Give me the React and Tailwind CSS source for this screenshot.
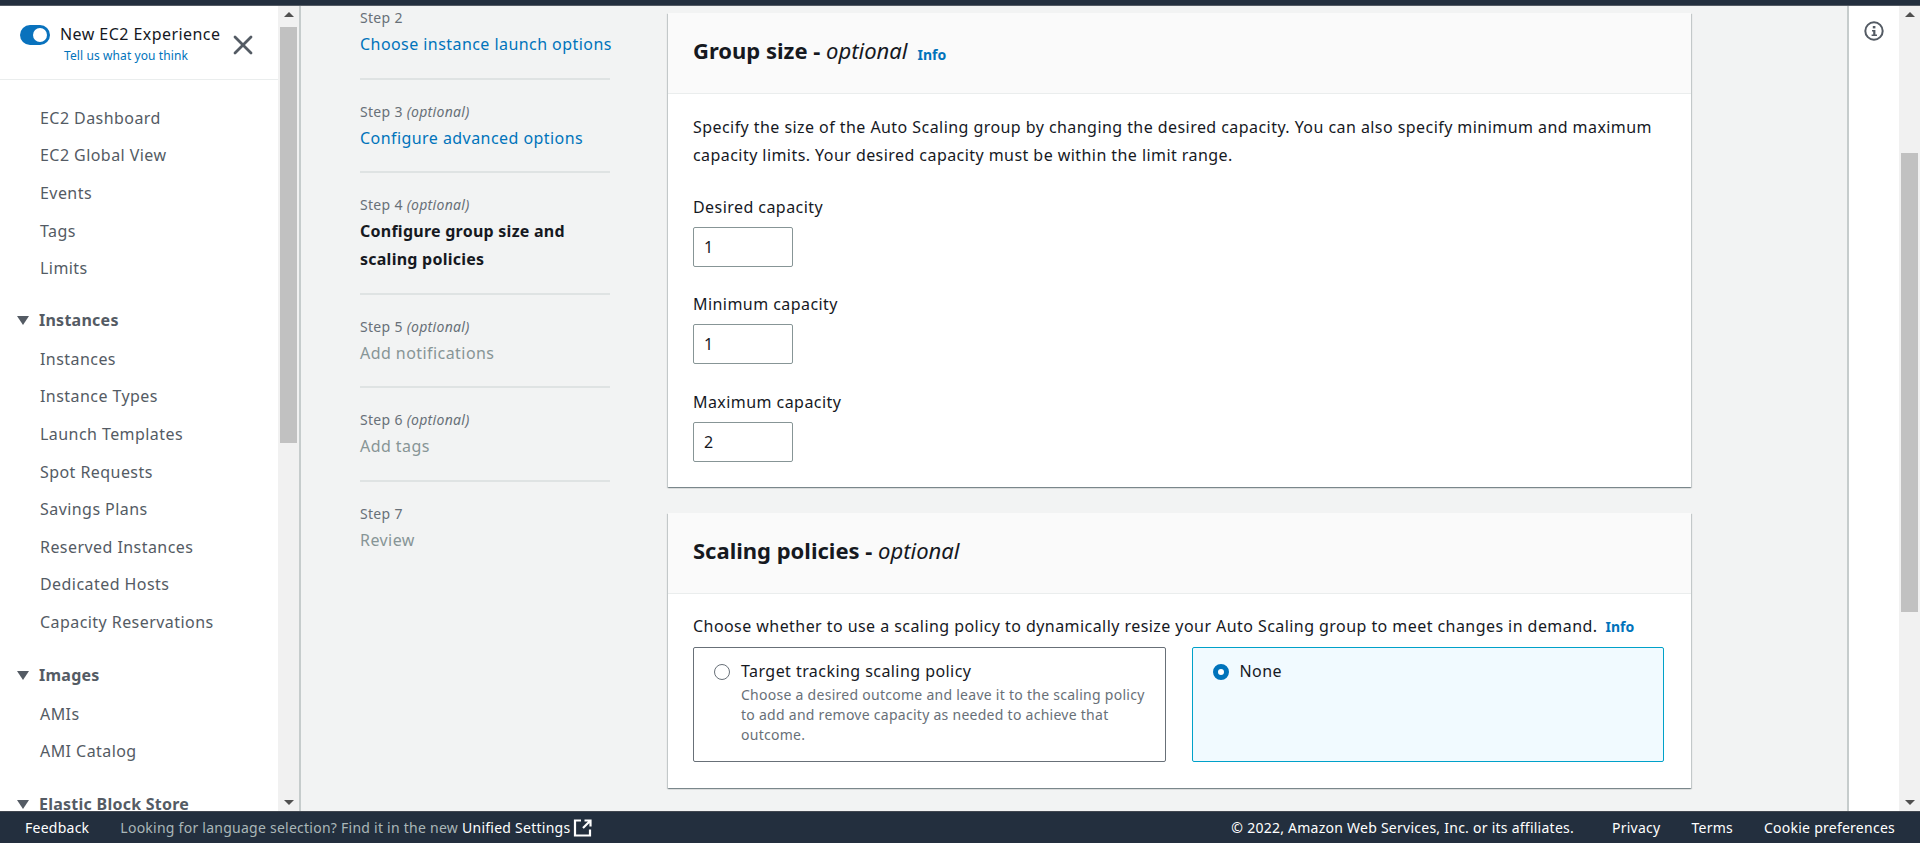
import { X } from 'lucide-react';

const navTop = ['EC2 Dashboard', 'EC2 Global View', 'Events', 'Tags', 'Limits'];
const navInstances = ['Instances', 'Instance Types', 'Launch Templates', 'Spot Requests', 'Savings Plans', 'Reserved Instances', 'Dedicated Hosts', 'Capacity Reservations'];
const navImages = ['AMIs', 'AMI Catalog'];

function ScrollBar({ thumbTop, thumbHeight, width }) {
  return (
    <div className={`${width} shrink-0 flex flex-col items-center bg-[#f1f1f1]`}>
      <div className="h-[17px] w-full flex items-center justify-center shrink-0">
        <div className="w-0 h-0 border-x-[5px] border-x-transparent border-b-[5px] border-b-[#505050]" />
      </div>
      <div className={`${thumbTop} shrink-0`} />
      <div className={`${thumbHeight} w-[17px] bg-[#c1c1c1] shrink-0`} />
      <div className="flex-1" />
      <div className="h-[17px] w-full flex items-center justify-center shrink-0">
        <div className="w-0 h-0 border-x-[5px] border-x-transparent border-t-[5px] border-t-[#505050]" />
      </div>
    </div>
  );
}

function NavItem({ label }) {
  return <div className="h-[37.6px] flex items-center pl-10 text-[#545b64]">{label}</div>;
}

function NavGroup({ label }) {
  return (
    <div className="h-[39px] flex items-center pl-4 font-bold tracking-[0.25px] text-[#545b64]">
      <span className="w-0 h-0 mr-[10px] ml-[1px] border-x-[6px] border-x-transparent border-t-[9px] border-t-[#545b64]" />
      {label}
    </div>
  );
}

function Sidebar() {
  return (
    <aside className="w-[301px] shrink-0 flex border-r-2 border-[#c6cccc] bg-white">
      <div className="flex-1 min-w-0 overflow-hidden">
        <div className="h-[74px] border-b border-[#eaeded] flex items-start pl-5 relative">
          <div className="mt-[19px] w-[30px] h-5 rounded-full bg-[#0972bd] flex items-center justify-end pr-[3px] shrink-0">
            <div className="w-[14px] h-[14px] rounded-full bg-white" />
          </div>
          <div className="ml-[10px] mt-[17px] text-[#16191f] whitespace-nowrap leading-[22px]">
            New EC2 Experience
            <div className="text-[12px] tracking-[0.1px] leading-4 mt-[3px] ml-1 text-[#0073bb]">Tell us what you think</div>
          </div>
          <X className="absolute left-[227px] top-[23px] text-[#545b64]" size={32} strokeWidth={2.1} />
        </div>
        <div className="pt-[19px]">
          {navTop.map((n) => <NavItem key={n} label={n} />)}
          <div className="mt-[14px]"><NavGroup label="Instances" /></div>
          {navInstances.map((n) => <NavItem key={n} label={n} />)}
          <div className="mt-[15px]"><NavGroup label="Images" /></div>
          {navImages.map((n) => <NavItem key={n} label={n} />)}
          <div className="mt-[15px]"><NavGroup label="Elastic Block Store" /></div>
        </div>
      </div>
      <ScrollBar width="w-[21px]" thumbTop="h-[4px]" thumbHeight="h-[416px]" />
    </aside>
  );
}

function Step({ step, optional, children, last }) {
  return (
    <li className={`pt-[21px] pb-[19.6px] ${last ? '' : 'border-b-2 border-[#dfe3e3]'}`}>
      <div className="text-[14px] tracking-[0.3px] leading-[22px] text-[#687078]">
        {step} {optional && <i>(optional)</i>}
      </div>
      <div className="mt-[1px] leading-[28px]">{children}</div>
    </li>
  );
}

function Steps() {
  return (
    <ol className="w-[250px] shrink-0 -mt-[20px]">
      <Step step="Step 2"><span className="whitespace-nowrap text-[#0073bb]">Choose instance launch options</span></Step>
      <Step step="Step 3" optional><span className="text-[#0073bb]">Configure advanced options</span></Step>
      <Step step="Step 4" optional><span className="block w-[210px] font-bold tracking-[0.25px] text-[#16191f]">Configure group size and scaling policies</span></Step>
      <Step step="Step 5" optional><span className="text-[#879596]">Add notifications</span></Step>
      <Step step="Step 6" optional><span className="text-[#879596]">Add tags</span></Step>
      <Step step="Step 7" last><span className="text-[#879596]">Review</span></Step>
    </ol>
  );
}

function Card({ title, info, children }) {
  return (
    <section className="bg-white shadow-[0_1px_1px_0_rgba(0,28,36,0.3),1px_1px_1px_0_rgba(0,28,36,0.15),-1px_1px_1px_0_rgba(0,28,36,0.15)]">
      <header className="h-[81px] bg-[#fafafa] border-b border-[#eaeded] flex items-center pl-[25px] pr-6">
        <h2 className="-mt-[6px] text-[22px] tracking-normal font-bold text-[#16191f]">{title} - <i className="font-normal">optional</i></h2>
        {info && <span className="ml-[10px] mt-[2px] text-[14px] tracking-normal font-bold text-[#0073bb]">Info</span>}
      </header>
      {children}
    </section>
  );
}

function Field({ label, value, top }) {
  return (
    <div className={top}>
      <div className="leading-[22px] text-[#16191f]">{label}</div>
      <div className="mt-[9px] w-[100px] h-10 border border-[#879596] rounded-[2px] flex items-center px-[10px] text-[#16191f] bg-white">{value}</div>
    </div>
  );
}

function RadioCard({ selected, label, desc }) {
  return (
    <div className={`flex-1 h-[115px] rounded-[2px] border flex items-start pl-5 pr-3 pt-3 ${selected ? 'border-[#00a1c9] bg-[#f1faff]' : 'border-[#687078] bg-white'}`}>
      {selected ? (
        <span className="mt-[4px] w-4 h-4 rounded-full border-[5px] border-[#0073bb] bg-white shrink-0" />
      ) : (
        <span className="mt-[4px] w-4 h-4 rounded-full border border-[#687078] bg-white shrink-0" />
      )}
      <div className="ml-[11px]">
        <div className="leading-[22px] text-[#16191f]">{label}</div>
        {desc && <div className="mt-[3px] text-[14px] tracking-[0.27px] leading-5 text-[#687078]">{desc}</div>}
      </div>
    </div>
  );
}

function FormCards() {
  return (
    <div className="w-[1023px] shrink-0 mt-[7px] flex flex-col gap-[26px]">
      <Card title="Group size" info>
        <div className="pl-[25px] pr-[27px] pt-[19px] pb-[25px]">
          <p className="leading-7 text-[#16191f]">
            Specify the size of the Auto Scaling group by changing the desired capacity. You can also specify minimum and maximum capacity limits. Your desired capacity must be within the limit range.
          </p>
          <Field top="mt-[27px]" label="Desired capacity" value="1" />
          <Field top="mt-[26px]" label="Minimum capacity" value="1" />
          <Field top="mt-[27px]" label="Maximum capacity" value="2" />
        </div>
      </Card>
      <Card title="Scaling policies">
        <div className="pl-[25px] pr-[27px] pt-[21px] pb-[26px]">
          <p className="leading-[22px] text-[#16191f] whitespace-nowrap">
            Choose whether to use a scaling policy to dynamically resize your Auto Scaling group to meet changes in demand.
            <span className="ml-2 text-[14px] tracking-normal font-bold text-[#0073bb]">Info</span>
          </p>
          <div className="mt-[9px] flex gap-[26px]">
            <RadioCard label="Target tracking scaling policy" desc="Choose a desired outcome and leave it to the scaling policy to add and remove capacity as needed to achieve that outcome." />
            <RadioCard selected label="None" />
          </div>
        </div>
      </Card>
    </div>
  );
}

function InfoPanel() {
  return (
    <aside className="w-[73px] shrink-0 flex border-l-2 border-[#c6cccc] bg-white">
      <div className="flex-1 flex justify-center pt-[15px]">
        <svg width="20" height="20" viewBox="0 0 20 20" fill="none">
          <circle cx="10" cy="10" r="8.7" stroke="#545b64" strokeWidth="2" />
          <rect x="8.8" y="5" width="2.6" height="2.4" fill="#545b64" />
          <path d="M8 9h3.4v4.6H13V15H7.6v-1.4h1.6v-3.2H8z" fill="#545b64" />
        </svg>
      </div>
      <ScrollBar width="w-[21px]" thumbTop="h-[130px]" thumbHeight="h-[459px]" />
    </aside>
  );
}

function Footer() {
  return (
    <footer className="h-[32px] shrink-0 bg-[#232f3e] border-t border-[#414750] flex items-center text-[14px] tracking-[0.25px] text-white px-[25px] whitespace-nowrap">
      <span>Feedback</span>
      <span className="ml-[31px] text-[#aab7b8]">Looking for language selection? Find it in the new</span>
      <span className="ml-1">Unified Settings</span>
      <svg className="ml-[3px]" width="20" height="20" viewBox="0 0 20 20" fill="none" stroke="#fff" strokeWidth="2.2">
        <path d="M8 2.5H2v15h15v-6" />
        <path d="M10 10l7-7M11.5 2.5h6v6" />
      </svg>
      <span className="ml-auto">© 2022, Amazon Web Services, Inc. or its affiliates.</span>
      <span className="ml-[38px]">Privacy</span>
      <span className="ml-[31px]">Terms</span>
      <span className="ml-[31px]">Cookie preferences</span>
    </footer>
  );
}

export default function App() {
  return (
    <div className="h-[843px] flex flex-col overflow-hidden bg-[#f2f3f3] text-[16px] tracking-[0.44px] font-['Noto_Sans',sans-serif]">
      <div className="h-[6px] shrink-0 bg-[#232f3e] border-b border-[#545b64]" />
      <div className="flex-1 min-h-0 flex">
        <Sidebar />
        <main className="flex-1 min-w-0 overflow-hidden flex gap-[58px] pl-[59px]">
          <Steps />
          <FormCards />
        </main>
        <InfoPanel />
      </div>
      <Footer />
    </div>
  );
}
